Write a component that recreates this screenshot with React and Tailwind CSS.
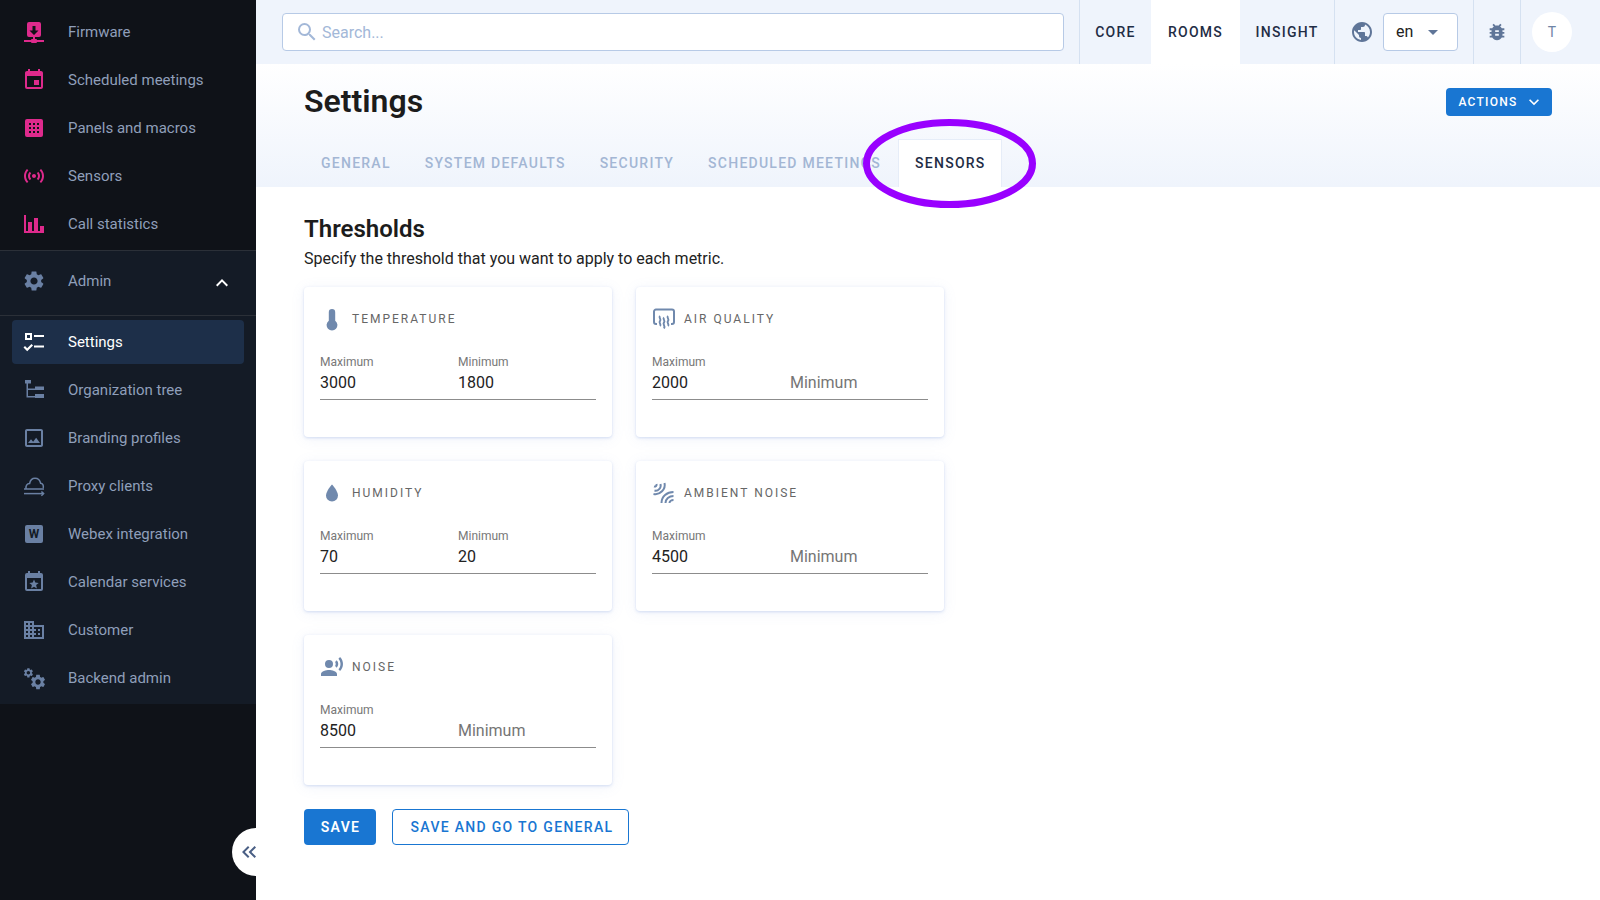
import { MdEvent, MdSensors, MdOutlineImage, MdDomain, MdPublic, MdBugReport, MdExpandLess, MdExpandMore, MdArrowDropDown, MdSearch, MdKeyboardDoubleArrowLeft } from 'react-icons/md';

const GEAR =
  'M19.14 12.94c.04-.3.06-.61.06-.94 0-.32-.02-.64-.07-.94l2.03-1.58c.18-.14.23-.41.12-.61l-1.92-3.32c-.12-.22-.37-.29-.59-.22l-2.39.96c-.5-.38-1.03-.7-1.62-.94l-.36-2.54c-.04-.24-.24-.41-.48-.41h-3.84c-.24 0-.43.17-.47.41l-.36 2.54c-.59.24-1.13.57-1.62.94l-2.39-.96c-.22-.08-.47 0-.59.22L2.74 8.87c-.12.21-.08.47.12.61l2.03 1.58c-.05.3-.09.63-.09.94s.02.64.07.94l-2.03 1.58c-.18.14-.23.41-.12.61l1.92 3.32c.12.22.37.29.59.22l2.39-.96c.5.38 1.03.7 1.62.94l.36 2.54c.05.24.24.41.48.41h3.84c.24 0 .44-.17.47-.41l.36-2.54c.59-.24 1.13-.56 1.62-.94l2.39.96c.22.08.47 0 .59-.22l1.92-3.32c.12-.22.07-.47-.12-.61l-2.01-1.58zM12 15.6c-1.98 0-3.6-1.62-3.6-3.6s1.62-3.6 3.6-3.6 3.6 1.62 3.6 3.6-1.62 3.6-3.6 3.6z';

const Svg = ({ children, size = 24, className = '' }) => (
  <svg width={size} height={size} viewBox="0 0 24 24" fill="currentColor" className={className}>
    {children}
  </svg>
);

const FirmwareIcon = (p) => (
  <Svg {...p}>
    <path d="M17 2H7A2 2 0 0 0 5 4V15A2 2 0 0 0 7 17H11V19H10A1 1 0 0 0 9 20H2V22H9A1 1 0 0 0 10 23H14A1 1 0 0 0 15 22H22V20H15A1 1 0 0 0 14 19H13V17H17A2 2 0 0 0 19 15V4A2 2 0 0 0 17 2M12 15L7.5 10.5H10.5V6H13.5V10.5H16.5Z" />
  </Svg>
);

const PanelsIcon = (p) => (
  <Svg {...p}>
    <path
      fillRule="evenodd"
      d="M5 3H19A2 2 0 0 1 21 5V19A2 2 0 0 1 19 21H5A2 2 0 0 1 3 19V5A2 2 0 0 1 5 3ZM7 7V9H9V7ZM11 7V9H13V7ZM15 7V9H17V7ZM7 11V13H9V11ZM11 11V13H13V11ZM15 11V13H17V11ZM7 15V17H9V15ZM11 15V17H13V15ZM15 15V17H17V15Z"
    />
  </Svg>
);

const BarsIcon = (p) => (
  <Svg {...p}>
    <path d="M22 21H2V3H4V19H6V10H10V19H12V6H16V19H18V14H22V21Z" />
  </Svg>
);

const GearIcon = (p) => (
  <Svg {...p}>
    <path d={GEAR} />
  </Svg>
);

const ChecklistIcon = (p) => (
  <Svg {...p}>
    <path fillRule="evenodd" d="M3 3H10V10H3ZM5 5V8H8V5ZM12 5H22V7H12ZM12 15.5H22V17.5H12Z" />
    <path d="M1.5 17.5L3 16L5.2 18.2L9.5 14L11 15.5L5.2 21.2Z" />
  </Svg>
);

const TreeIcon = (p) => (
  <Svg {...p}>
    <path d="M3 2H9V5.5H6V10.5H13V8.5H22V12H13V12H6V18H13V16H22V20H13V19.5H4.5V5.5H3Z" />
  </Svg>
);

const ProxyIcon = (p) => (
  <Svg {...p}>
    <g fill="none" stroke="currentColor" strokeWidth="1.5">
      <path d="M4.2 15C3.3 12 5 9.6 7.6 9.5C8.2 6.2 10.4 4.2 13 4.2C16 4.2 18 6.2 18.6 9.2C20.6 9.4 21.8 11.4 21.2 14" />
      <path d="M2 15H22" />
      <path d="M2 19.6H21.5" />
      <path d="M19.4 17.5L21.6 19.6L19.4 21.7" />
    </g>
  </Svg>
);

const CalendarStarIcon = (p) => (
  <Svg {...p}>
    <path
      fillRule="evenodd"
      d="M6 1H8V3H16V1H18V3H19A2 2 0 0 1 21 5V19A2 2 0 0 1 19 21H5A2 2 0 0 1 3 19V5A2 2 0 0 1 5 3H6ZM5 8V19H19V8Z"
    />
    <path d="M12 9.5L13.3 12.6L16.7 12.9L14.1 15.1L14.9 18.4L12 16.7L9.1 18.4L9.9 15.1L7.3 12.9L10.7 12.6Z" />
  </Svg>
);

const CogsIcon = (p) => (
  <Svg {...p}>
    <g transform="translate(0.64 1.04) scale(0.48)">
      <path d={GEAR} />
    </g>
    <g transform="translate(7 7) scale(0.75)">
      <path d={GEAR} />
    </g>
  </Svg>
);

const ThermoIcon = (p) => (
  <Svg {...p}>
    <path d="M12 2A3.2 3.2 0 0 1 15.2 5.2V13.7A5.4 5.4 0 1 1 8.8 13.7V5.2A3.2 3.2 0 0 1 12 2Z" />
  </Svg>
);

const DropIcon = (p) => (
  <Svg {...p}>
    <path d="M12 3.5C12 3.5 18 10 18 14.5A6 6 0 0 1 6 14.5C6 10 12 3.5 12 3.5Z" />
  </Svg>
);

const AirIcon = (p) => (
  <Svg {...p}>
    <path
      fill="none"
      stroke="currentColor"
      strokeWidth="2"
      d="M5 17H4A2 2 0 0 1 2 15V4.5A2 2 0 0 1 4 2.5H20A2 2 0 0 1 22 4.5V15A2 2 0 0 1 20 17H19"
    />
    <path
      fill="none"
      stroke="currentColor"
      strokeWidth="1.9"
      d="M8 9c-1.8 2 1.8 3 0 5s1.8 3 0 5M12 10.5c-1.8 2 1.8 3 0 5s1.8 3 0 6M16 9c-1.8 2 1.8 3 0 5s1.8 3 0 5"
    />
  </Svg>
);

const AmbientIcon = (p) => (
  <Svg {...p}>
    <g fill="none" stroke="currentColor" strokeWidth="2">
      <path d="M2.5 9.5C6 10.5 9.5 7 8.5 3" />
      <path d="M2 5.5C3.6 6 5 4.5 4.5 3" />
      <path d="M1.5 13C8 14.5 14 8 12.5 2" />
      <path d="M9.5 22C9.5 15.5 15 11 21.5 11" />
      <path d="M13.5 22C13.5 18 17 15 21.5 15" />
      <path d="M17.5 22C17.5 20.2 19.5 19 21.5 19" />
    </g>
  </Svg>
);

const VoiceIcon = (p) => (
  <Svg {...p}>
    <path d="M9 5A4 4 0 0 1 13 9A4 4 0 0 1 9 13A4 4 0 0 1 5 9A4 4 0 0 1 9 5M9 15C11.67 15 17 16.34 17 19V21H1V19C1 16.34 6.33 15 9 15M16.76 5.36C18.78 7.56 18.78 10.61 16.76 12.63L15.08 10.94C15.92 9.76 15.92 8.23 15.08 7.05L16.76 5.36M20.07 2C24 6.05 23.97 12.11 20.07 16L18.44 14.37C21.21 11.19 21.21 6.65 18.44 3.63L20.07 2Z" />
  </Svg>
);

const topNav = [
  { label: 'Firmware', Icon: FirmwareIcon },
  { label: 'Scheduled meetings', Icon: MdEvent },
  { label: 'Panels and macros', Icon: PanelsIcon },
  { label: 'Sensors', Icon: MdSensors },
  { label: 'Call statistics', Icon: BarsIcon },
];

const adminNav = [
  { label: 'Organization tree', Icon: TreeIcon },
  { label: 'Branding profiles', Icon: MdOutlineImage },
  { label: 'Proxy clients', Icon: ProxyIcon },
  { label: 'Webex integration', Icon: null },
  { label: 'Calendar services', Icon: CalendarStarIcon },
  { label: 'Customer', Icon: MdDomain },
  { label: 'Backend admin', Icon: CogsIcon },
];

const sensors = [
  { name: 'Temperature', Icon: ThermoIcon, max: '3000', min: '1800' },
  { name: 'Air quality', Icon: AirIcon, max: '2000', min: '' },
  { name: 'Humidity', Icon: DropIcon, max: '70', min: '20' },
  { name: 'Ambient noise', Icon: AmbientIcon, max: '4500', min: '' },
  { name: 'Noise', Icon: VoiceIcon, max: '8500', min: '' },
];

const tabs = ['General', 'System defaults', 'Security', 'Scheduled meetings'];

const NavItem = ({ label, Icon, iconColor }) => (
  <div className="flex h-12 items-center">
    <div className={`flex w-[68px] shrink-0 justify-center ${iconColor}`}>
      <Icon size={24} />
    </div>
    <span className="text-[15px] text-[#8f9fba]">{label}</span>
  </div>
);

const SensorCard = ({ name, Icon, max, min }) => (
  <div className="h-[150px] rounded bg-white px-4 pt-[17px] shadow-[0_1px_3px_rgba(120,150,220,0.3),0_2px_14px_rgba(120,150,220,0.1)]">
    <div className="flex h-[30px] items-center">
      <div className="flex w-6 justify-center text-[#7089ad]">
        <Icon size={24} />
      </div>
      <span className="ml-2 text-xs uppercase tracking-[2px] text-[#666]">{name}</span>
    </div>
    <div className="mt-[21px] grid h-[45px] grid-cols-2 border-b border-[#8c8c8c]">
      <div>
        <div className="text-xs leading-[14px] text-[#777]">Maximum</div>
        <div className="mt-[4px] text-base leading-[20px] text-[#222]">{max}</div>
      </div>
      <div>
        {min ? (
          <>
            <div className="text-xs leading-[14px] text-[#777]">Minimum</div>
            <div className="mt-[4px] text-base leading-[20px] text-[#222]">{min}</div>
          </>
        ) : (
          <div className="mt-[18px] text-base leading-[20px] text-[#757575]">Minimum</div>
        )}
      </div>
    </div>
  </div>
);

export default function App() {
  return (
    <div className="relative flex h-[900px] w-[1600px] overflow-hidden bg-white font-['Roboto',sans-serif]">
      <aside className="relative flex w-[256px] shrink-0 flex-col bg-[#0f1218] pt-2">
        {topNav.map((item) => (
          <NavItem key={item.label} {...item} iconColor="text-[#de2a8c]" />
        ))}
        <div className="mt-[2px] border-t border-[#2b3038] bg-[#141b26] pb-[2px]">
          <div className="flex h-[65px] items-center border-b border-[#2b3038] pb-[4px]">
            <div className="flex w-[68px] justify-center text-[#6a80a3]">
              <GearIcon size={24} />
            </div>
            <span className="flex-1 text-[15px] text-[#8f9fba]">Admin</span>
            <MdExpandLess size={24} className="mr-[22px] mt-[4px] text-white" />
          </div>
          <div className="mx-3 mt-[4px] mb-[2px] flex h-11 items-center rounded bg-[#1d2f49]">
            <div className="flex w-[44px] justify-center text-white">
              <ChecklistIcon size={24} />
            </div>
            <span className="ml-[12px] text-[15px] text-white">Settings</span>
          </div>
          {adminNav.map((item) =>
            item.Icon ? (
              <NavItem key={item.label} {...item} iconColor="text-[#6a80a3]" />
            ) : (
              <div key={item.label} className="flex h-12 items-center">
                <div className="flex w-[68px] justify-center">
                  <span className="flex h-[18px] w-[18px] items-center justify-center rounded-[2px] bg-[#6a80a3] text-[12px] font-bold text-[#141b26]">
                    W
                  </span>
                </div>
                <span className="text-[15px] text-[#8f9fba]">{item.label}</span>
              </div>
            )
          )}
        </div>
        <button className="absolute bottom-[24px] right-0 flex h-12 w-6 items-center justify-end overflow-hidden rounded-l-full bg-white text-[#4a5f85]">
          <MdKeyboardDoubleArrowLeft size={24} className="-mr-[5px] shrink-0" />
        </button>
      </aside>

      <div className="flex min-w-0 flex-1 flex-col">
        <header className="flex h-16 shrink-0 items-stretch bg-[#eff4fc]">
          <div className="flex flex-1 items-center pl-[26px] pr-[15px]">
            <div className="flex h-[38px] w-full items-center rounded border border-[#b7cae6] bg-white pl-[12px]">
              <MdSearch size={24} className="text-[#a3b8d8]" />
              <span className="ml-[3px] pt-[1px] text-base text-[#a3b8d8]">Search...</span>
            </div>
          </div>
          <div className="flex items-stretch border-l border-[#d5e1f1] text-sm font-medium tracking-[1.25px] text-[#1f2d45]">
            <div className="flex w-[71px] items-center justify-center">CORE</div>
            <div className="flex w-[89px] items-center justify-center bg-white">ROOMS</div>
            <div className="flex w-[94px] items-center justify-center">INSIGHT</div>
          </div>
          <div className="flex items-center border-l border-[#d5e1f1] pl-[15px] pr-[15px]">
            <MdPublic size={24} className="text-[#5f7598]" />
            <div className="ml-[9px] flex h-[38px] w-[75px] items-center rounded border border-[#b7cae6] bg-white pl-[12px] text-base text-[#222]">
              en
              <MdArrowDropDown size={24} className="ml-[8px] text-[#5f7598]" />
            </div>
          </div>
          <div className="flex w-[47px] items-center justify-center border-l border-[#d5e1f1]">
            <MdBugReport size={22} className="text-[#5f7598]" />
          </div>
          <div className="flex w-[80px] items-center border-l border-[#d5e1f1] pl-[11px]">
            <div className="flex h-10 w-10 items-center justify-center rounded-full bg-white text-sm text-[#6f84a6]">T</div>
          </div>
        </header>

        <div className="h-[123px] shrink-0 bg-gradient-to-b from-white to-[#eff4fc] pl-12 pr-12">
          <div className="flex h-[75px] items-center justify-between pb-[1px]">
            <h1 className="text-[32px] font-semibold leading-10 text-[#1c1c1c]">Settings</h1>
            <button className="mt-[2px] flex h-7 w-[106px] items-center justify-center rounded bg-[#1976d2] pl-[4px] text-xs font-medium tracking-[1.25px] text-white">
              ACTIONS
              <MdExpandMore size={20} className="ml-[6px]" />
            </button>
          </div>
          <div className="flex h-[48px] items-stretch">
            {tabs.map((t) => (
              <div key={t} className="flex items-center px-[17px] text-sm font-medium uppercase tracking-[1.25px] text-[#a3b6d4]">
                {t}
              </div>
            ))}
            <div className="flex items-center border-x border-t border-[#e6edf8] bg-white pb-[1px] pl-[16px] pr-[15px] text-sm font-medium tracking-[1.25px] text-[#1f2d45]">
              SENSORS
            </div>
          </div>
        </div>

        <main className="flex-1 pl-12 pt-[28px]">
          <h2 className="text-2xl font-semibold leading-7 text-[#1c1c1c]">Thresholds</h2>
          <p className="mt-[6px] text-base leading-5 text-[#222]">Specify the threshold that you want to apply to each metric.</p>
          <div className="mt-[18px] grid w-[640px] grid-cols-[308px_308px] gap-x-6 gap-y-6">
            {sensors.map((s) => (
              <SensorCard key={s.name} {...s} />
            ))}
          </div>
          <div className="mt-6 flex gap-4">
            <button className="h-9 w-[72px] rounded bg-[#1976d2] pl-[1px] text-sm font-semibold tracking-[1.25px] text-white">SAVE</button>
            <button className="h-9 w-[237px] rounded border border-[#1976d2] pl-[3px] text-sm font-medium tracking-[1.3px] text-[#1976d2]">
              SAVE AND GO TO GENERAL
            </button>
          </div>
        </main>
      </div>

      {/* purple hand drawn highlight over the sensors tab */}
      <svg className="pointer-events-none absolute left-[860px] top-[116px]" width="182" height="96" viewBox="0 0 182 96" fill="none">
        <ellipse cx="89.5" cy="47.5" rx="83" ry="41" stroke="#9900ff" strokeWidth="7" />
      </svg>
    </div>
  );
}
